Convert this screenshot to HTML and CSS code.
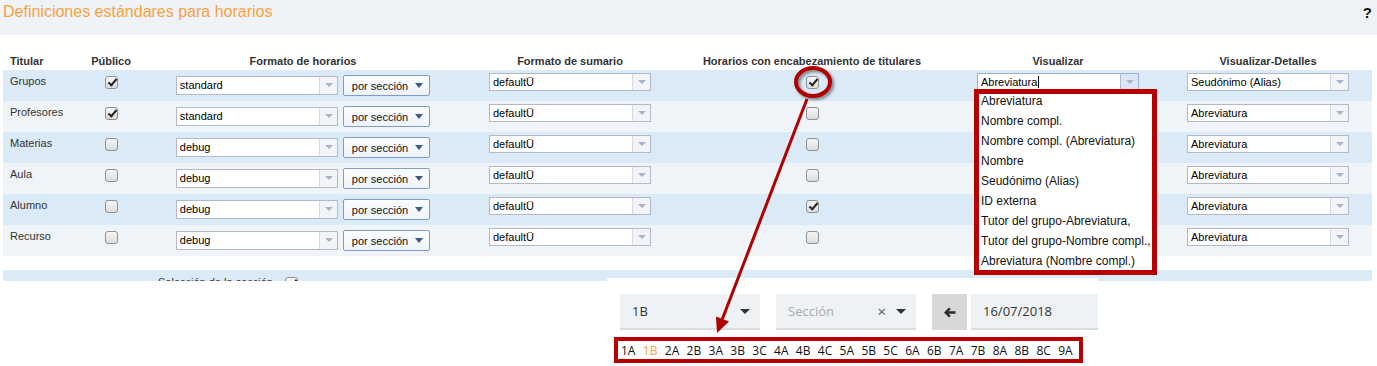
FILE: index.html
```html
<!DOCTYPE html>
<html lang="es">
<head>
    <meta charset="UTF-8">
    <meta name="viewport" content="width=device-width, initial-scale=1.0">
    <title>Definiciones estándares para horarios</title>
    <link rel="stylesheet" href="styles.css">
</head>
<body>
    <div class="page-head">
        <h1>Definiciones estándares para horarios</h1>
        <span class="help">?</span>
    </div>

    <table class="defs">
        <colgroup>
            <col style="width: 70px">
            <col style="width: 76px">
            <col style="width: 308px">
            <col style="width: 226px">
            <col style="width: 258px">
            <col style="width: 234px">
            <col style="width: 197px">
        </colgroup>
        <thead>
            <tr>
                <th class="left">Titular</th>
                <th>Público</th>
                <th>Formato de horarios</th>
                <th>Formato de sumario</th>
                <th>Horarios con encabezamiento de titulares</th>
                <th>Visualizar</th>
                <th>Visualizar-Detalles</th>
            </tr>
        </thead>
        <tbody>
            <tr class="odd">
                <td class="label">Grupos</td>
                <td><span class="cb checked"></span></td>
                <td>
                    <div class="fmt">
                        <span class="combo tall"><span class="val">standard</span><span class="trig"></span></span>
                        <span class="split-btn">por sección <span class="caret"></span></span>
                    </div>
                </td>
                <td><span class="combo"><span class="val">defaultÜ</span><span class="trig"></span></span></td>
                <td><span class="cb checked"></span></td>
                <td><span class="combo active"><span class="val">Abreviatura<span class="cursor"></span></span><span class="trig"></span></span></td>
                <td><span class="combo"><span class="val">Seudónimo (Alias)</span><span class="trig"></span></span></td>
            </tr>
            <tr class="even">
                <td class="label">Profesores</td>
                <td><span class="cb checked"></span></td>
                <td>
                    <div class="fmt">
                        <span class="combo tall"><span class="val">standard</span><span class="trig"></span></span>
                        <span class="split-btn">por sección <span class="caret"></span></span>
                    </div>
                </td>
                <td><span class="combo"><span class="val">defaultÜ</span><span class="trig"></span></span></td>
                <td><span class="cb"></span></td>
                <td></td>
                <td><span class="combo"><span class="val">Abreviatura</span><span class="trig"></span></span></td>
            </tr>
            <tr class="odd">
                <td class="label">Materias</td>
                <td><span class="cb"></span></td>
                <td>
                    <div class="fmt">
                        <span class="combo tall"><span class="val">debug</span><span class="trig"></span></span>
                        <span class="split-btn">por sección <span class="caret"></span></span>
                    </div>
                </td>
                <td><span class="combo"><span class="val">defaultÜ</span><span class="trig"></span></span></td>
                <td><span class="cb"></span></td>
                <td></td>
                <td><span class="combo"><span class="val">Abreviatura</span><span class="trig"></span></span></td>
            </tr>
            <tr class="even">
                <td class="label">Aula</td>
                <td><span class="cb"></span></td>
                <td>
                    <div class="fmt">
                        <span class="combo tall"><span class="val">debug</span><span class="trig"></span></span>
                        <span class="split-btn">por sección <span class="caret"></span></span>
                    </div>
                </td>
                <td><span class="combo"><span class="val">defaultÜ</span><span class="trig"></span></span></td>
                <td><span class="cb"></span></td>
                <td></td>
                <td><span class="combo"><span class="val">Abreviatura</span><span class="trig"></span></span></td>
            </tr>
            <tr class="odd">
                <td class="label">Alumno</td>
                <td><span class="cb"></span></td>
                <td>
                    <div class="fmt">
                        <span class="combo tall"><span class="val">debug</span><span class="trig"></span></span>
                        <span class="split-btn">por sección <span class="caret"></span></span>
                    </div>
                </td>
                <td><span class="combo"><span class="val">defaultÜ</span><span class="trig"></span></span></td>
                <td><span class="cb checked"></span></td>
                <td></td>
                <td><span class="combo"><span class="val">Abreviatura</span><span class="trig"></span></span></td>
            </tr>
            <tr class="even">
                <td class="label">Recurso</td>
                <td><span class="cb"></span></td>
                <td>
                    <div class="fmt">
                        <span class="combo tall"><span class="val">debug</span><span class="trig"></span></span>
                        <span class="split-btn">por sección <span class="caret"></span></span>
                    </div>
                </td>
                <td><span class="combo"><span class="val">defaultÜ</span><span class="trig"></span></span></td>
                <td><span class="cb"></span></td>
                <td></td>
                <td><span class="combo"><span class="val">Abreviatura</span><span class="trig"></span></span></td>
            </tr>
        </tbody>
    </table>

    <div class="section-bar">
        <span>Selección de la sección</span>
        <span class="cb checked"></span>
    </div>

    <!-- lista abierta de "Visualizar" -->
    <ul class="dropdown">
        <li>Abreviatura</li>
        <li>Nombre compl.</li>
        <li>Nombre compl. (Abreviatura)</li>
        <li>Nombre</li>
        <li>Seudónimo (Alias)</li>
        <li>ID externa</li>
        <li>Tutor del grupo-Abreviatura,</li>
        <li>Tutor del grupo-Nombre compl.,</li>
        <li>Abreviatura (Nombre compl.)</li>
    </ul>

    <!-- recorte de la vista de horarios -->
    <div class="picker">
        <div class="picker-row">
            <div class="sel">
                <span class="sel-text">1B</span>
                <span class="sel-caret"></span>
            </div>
            <div class="sel">
                <span class="sel-text placeholder">Sección</span>
                <span class="sel-clear">×</span>
                <span class="sel-caret"></span>
            </div>
            <div class="back-btn">
                <svg width="12" height="11" viewBox="0 0 12 11">
                    <path d="M0 5.5 L5 0.5 L6.8 2.3 L4.6 4.3 L11.5 4.3 L11.5 6.7 L4.6 6.7 L6.8 8.7 L5 10.5 Z" fill="#2b2b2b"/>
                </svg>
            </div>
            <div class="date">16/07/2018</div>
        </div>
        <div class="classes">
            <span>1A</span>
            <span class="current">1B</span>
            <span>2A</span>
            <span>2B</span>
            <span>3A</span>
            <span>3B</span>
            <span>3C</span>
            <span>4A</span>
            <span>4B</span>
            <span>4C</span>
            <span>5A</span>
            <span>5B</span>
            <span>5C</span>
            <span>6A</span>
            <span>6B</span>
            <span>7A</span>
            <span>7B</span>
            <span>8A</span>
            <span>8B</span>
            <span>8C</span>
            <span>9A</span>
        </div>
    </div>

    <!-- marcas: círculo y flecha -->
    <svg class="marks" width="1377" height="366" viewBox="0 0 1377 366">
        <defs>
            <filter id="shade" x="-30%" y="-30%" width="160%" height="160%">
                <feDropShadow dx="2" dy="2" stdDeviation="1.5" flood-color="#000" flood-opacity="0.45"/>
            </filter>
        </defs>
        <ellipse cx="813" cy="82" rx="17" ry="14" fill="none" stroke="#b00000" stroke-width="4" filter="url(#shade)"/>
        <line x1="807" y1="99" x2="722" y2="320" stroke="#b00000" stroke-width="3"/>
        <polygon points="717,333 729,321.5 716,316.5" fill="#b00000"/>
    </svg>
</body>
</html>
```

FILE: styles.css
```css
body {
    margin: 0;
    font-family: "Liberation Sans", Arial, sans-serif;
    font-size: 11px;
    color: #333;
    background-color: #fff;
    position: relative;
    width: 1377px;
    height: 366px;
    overflow: hidden;
}

.page-head {
    height: 35px;
    background-color: #eff3f7;
    display: flex;
    justify-content: space-between;
    align-items: flex-start;
    padding: 0 5px 0 3px;
}

.page-head h1 {
    margin: 0;
    padding-top: 2px;
    font-size: 16px;
    font-weight: normal;
    line-height: 20px;
    color: #f7a23e;
}

.help {
    font-size: 15px;
    font-weight: bold;
    color: #111;
    line-height: 18px;
    padding-top: 4px;
}

.defs {
    margin: 17px 0 0 3px;
    width: 1369px;
    border-collapse: collapse;
    table-layout: fixed;
}

.defs th {
    font-weight: bold;
    text-align: center;
    padding: 3px 0 2px;
    line-height: 13px;
    color: #333;
}

.defs tbody tr {
    height: 31px;
}

.defs td {
    padding: 3px 0 0;
    vertical-align: top;
    text-align: center;
}

.defs th:last-child,
.defs td:last-child {
    padding-right: 11px;
}

.defs th.left,
.defs td.label {
    text-align: left;
    padding-left: 7px;
}

.defs td.label {
    padding-top: 5px;
    line-height: 13px;
}

.defs tr.odd td {
    background-color: #daeaf6;
}

.defs tr.even td {
    background-color: #eff4f8;
}

/* checkbox */
.cb {
    display: inline-block;
    position: relative;
    width: 13px;
    height: 13px;
    box-sizing: border-box;
    margin-top: 3px;
    border: 1px solid #8e9092;
    border-radius: 3px;
    background: linear-gradient(#f6f6f6, #dcdcdc);
    vertical-align: top;
}

.cb.checked::after {
    content: "";
    position: absolute;
    left: 4px;
    top: 0;
    width: 3px;
    height: 7px;
    border: solid #222;
    border-width: 0 2px 2px 0;
    transform: rotate(40deg);
}

/* combo */
.combo {
    display: inline-flex;
    width: 162px;
    height: 18px;
    box-sizing: border-box;
    border: 1px solid #b5b8c8;
    background-color: #fff;
    text-align: left;
    vertical-align: top;
}

.combo.tall {
    height: 19px;
    margin-top: 3px;
}

.combo .val {
    flex: 1;
    padding: 0 3px;
    font-size: 11px;
    line-height: 16px;
    color: #000;
    white-space: nowrap;
    overflow: hidden;
}

.combo .trig {
    width: 17px;
    position: relative;
    border-left: 1px solid #d5d9e0;
    background-color: #f2f4f8;
}

.combo .trig::after {
    content: "";
    position: absolute;
    left: 5px;
    top: 6px;
    border-left: 4px solid transparent;
    border-right: 4px solid transparent;
    border-top: 4px solid #a4b4ca;
}

.combo.active {
    border-color: #9ab0cc;
}

.combo.active .trig {
    background-color: #dde7f3;
    border-left-color: #a9bcd6;
}

.cursor {
    display: inline-block;
    width: 1px;
    height: 12px;
    margin-left: 1px;
    background-color: #000;
    vertical-align: -2px;
}

.fmt {
    display: inline-flex;
    gap: 5px;
    align-items: flex-start;
}

.split-btn {
    display: inline-flex;
    align-items: center;
    gap: 7px;
    height: 21px;
    box-sizing: border-box;
    margin-top: 2px;
    padding: 0 6px 0 8px;
    border: 1px solid #7f9dc4;
    border-radius: 2px;
    background: linear-gradient(#fbfcfe, #eef3f9);
    color: #111;
    font-size: 11px;
    white-space: nowrap;
}

.caret {
    width: 0;
    height: 0;
    border-left: 4px solid transparent;
    border-right: 4px solid transparent;
    border-top: 5px solid #3c5a86;
}

.section-bar {
    margin: 14px 5px 0 3px;
    height: 11px;
    box-sizing: border-box;
    overflow: hidden;
    padding: 6px 0 0 155px;
    background-color: #daeaf6;
    display: flex;
    align-items: flex-start;
    gap: 12px;
    line-height: 13px;
}

.section-bar .cb {
    margin-top: 1px;
}

/* open list */
.dropdown {
    position: absolute;
    left: 974px;
    top: 89px;
    width: 183px;
    height: 186px;
    box-sizing: border-box;
    margin: 0;
    padding: 0;
    list-style: none;
    overflow: hidden;
    border: 5px solid #b80000;
    background-color: #fff;
    font-size: 12px;
    color: #111;
}

.dropdown li {
    height: 20px;
    box-sizing: border-box;
    padding: 0 0 6px 2px;
    line-height: 14px;
    white-space: nowrap;
}

/* picker panel */
.picker {
    position: absolute;
    left: 607px;
    top: 278px;
    width: 491px;
    height: 88px;
    box-sizing: border-box;
    padding: 16px 0 0 13px;
    background-color: #fff;
    font-family: "Open Sans", sans-serif;
    color: #333;
}

.picker-row {
    display: flex;
    height: 36px;
}

.sel {
    width: 140px;
    margin-right: 16px;
    box-sizing: border-box;
    display: flex;
    align-items: center;
    padding: 0 10px 0 12px;
    background-color: #eff2f5;
    border-bottom: 2px solid #dcdcdc;
    font-size: 13px;
}

.sel-text {
    flex: 1;
}

.placeholder {
    color: #a9a9a9;
}

.sel-clear {
    color: #555;
    font-size: 15px;
    margin-right: 10px;
}

.sel-caret {
    width: 0;
    height: 0;
    border-left: 5px solid transparent;
    border-right: 5px solid transparent;
    border-top: 5px solid #333;
}

.back-btn {
    width: 35px;
    margin-right: 4px;
    display: flex;
    align-items: center;
    justify-content: center;
    background-color: #d8d8d8;
}

.date {
    width: 127px;
    box-sizing: border-box;
    display: flex;
    align-items: center;
    padding-left: 12px;
    background-color: #eff2f5;
    border-bottom: 2px solid #dcdcdc;
    font-size: 13px;
}

.classes {
    margin: 7px 0 0 -6px;
    width: 469px;
    height: 26px;
    box-sizing: border-box;
    border: 4px solid #b80000;
    padding: 0 3px;
    display: flex;
    align-items: center;
    gap: 7.35px;
    font-size: 12px;
    color: #111;
}

.classes .current {
    color: #f5a04a;
}

.marks {
    position: absolute;
    left: 0;
    top: 0;
    pointer-events: none;
}
```
